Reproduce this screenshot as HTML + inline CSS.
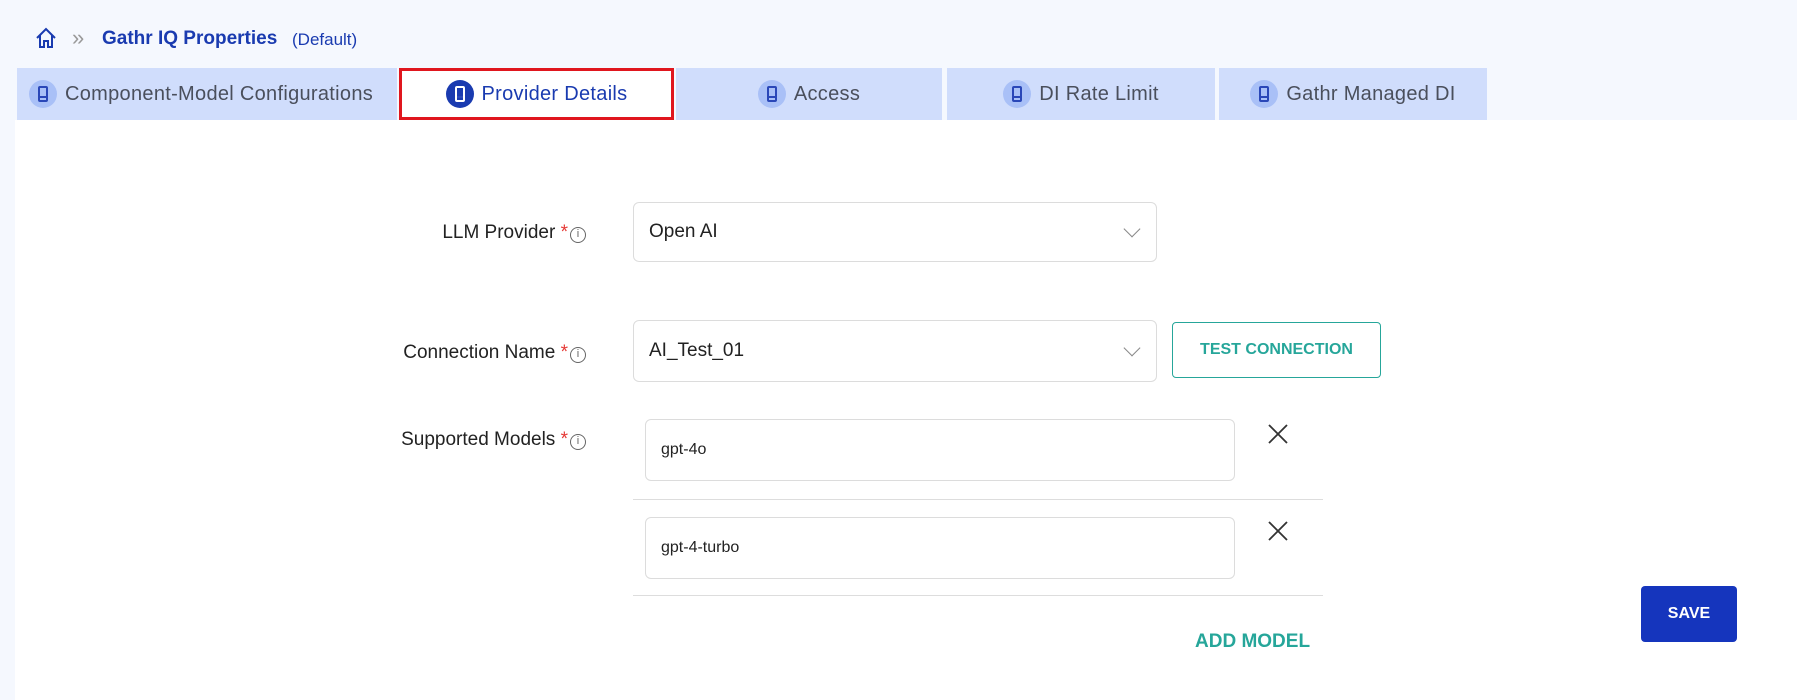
<!DOCTYPE html>
<html><head><meta charset="utf-8"><style>
*{box-sizing:border-box;margin:0;padding:0}
body{width:1797px;height:700px;overflow:hidden;background:#f5f8fe;font-family:"Liberation Sans",sans-serif;position:relative;color:#222}
.abs{position:absolute}
.tab{position:absolute;top:68px;height:52px;background:#d0ddfc;display:flex;align-items:center;justify-content:center;font-size:20px;letter-spacing:0.3px;color:#4a4f5c}
.ic{width:28px;height:28px;border-radius:50%;background:#a9c0f7;display:inline-flex;align-items:center;justify-content:center;margin-right:8px}
.ic i{width:10px;height:16px;border:2px solid #2a47b8;border-radius:2px;position:relative;display:block}
.ic i:after{content:"";position:absolute;left:0;right:0;bottom:2px;border-top:2px solid #2a47b8}
.panel{position:absolute;left:15px;top:120px;right:0;bottom:0;background:#fff}
.lbl{position:absolute;font-size:19px;color:#222;text-align:right;right:1211px;white-space:nowrap}
.lbl b{color:#e53935;font-weight:normal}
.info{display:inline-block;width:16px;height:16px;border:1.3px solid #666;border-radius:50%;font-size:11px;line-height:13px;text-align:center;color:#666;vertical-align:1px;margin-left:2px;font-style:normal}
.box{position:absolute;border:1px solid #dcdcdc;border-radius:6px;background:#fff;display:flex;align-items:center;padding-left:15px}
.chev{position:absolute;right:18px;top:50%;width:12px;height:12px;border-right:1.2px solid #888;border-bottom:1.2px solid #888;transform:translateY(-75%) rotate(45deg)}
.x{position:absolute}
.line{position:absolute;left:633px;width:690px;border-top:1.5px solid #ddd}
</style></head><body>
<svg class="abs" style="left:35px;top:27px" width="22" height="22" viewBox="0 0 22 22" fill="none" stroke="#1a3bb0" stroke-width="2"><path d="M2 11 L11 2 L20 11 M5 8 V20 H9 V14 H13 V20 H17 V8"/></svg>
<div class="abs" style="left:72px;top:25px;font-size:22px;color:#999">»</div>
<div class="abs" style="left:102px;top:28px;font-size:19px;font-weight:bold;color:#1a3bb0">Gathr IQ Properties</div>
<div class="abs" style="left:292px;top:30px;font-size:17px;color:#1a3bb0">(Default)</div>
<div class="tab" style="left:17px;width:380px;justify-content:flex-start;padding-left:12px"><span class="ic"><i></i></span>Component-Model Configurations</div>
<div class="tab" style="left:399px;width:275px;background:#fff;border:3px solid #e0161e;color:#1a3bb0"><span class="ic" style="background:#1a3bb0"><i style="border-color:#fff"></i></span>Provider Details</div>
<div class="tab" style="left:676px;width:266px"><span class="ic"><i></i></span>Access</div>
<div class="tab" style="left:947px;width:268px"><span class="ic"><i></i></span>DI Rate Limit</div>
<div class="tab" style="left:1219px;width:268px"><span class="ic"><i></i></span>Gathr Managed DI</div>
<div class="panel"></div>
<div class="lbl" style="top:222px">LLM Provider <b>*</b><span class="info">i</span></div>
<div class="box" style="left:633px;top:202px;width:524px;height:60px;font-size:19px">Open AI<span class="chev"></span></div>
<div class="lbl" style="top:342px">Connection Name <b>*</b><span class="info">i</span></div>
<div class="box" style="left:633px;top:320px;width:524px;height:62px;font-size:19px">AI_Test_01<span class="chev"></span></div>
<div class="abs" style="left:1172px;top:322px;width:209px;height:56px;border:1.5px solid #26a69a;border-radius:4px;color:#26a69a;font-weight:bold;font-size:16px;display:flex;align-items:center;justify-content:center">TEST CONNECTION</div>
<div class="lbl" style="top:429px">Supported Models <b>*</b><span class="info">i</span></div>
<div class="box" style="left:645px;top:419px;width:590px;height:62px;font-size:16px">gpt-4o</div>
<svg class="x" style="left:1268px;top:424px" width="20" height="20" viewBox="0 0 20 20" stroke="#333" stroke-width="1.8"><path d="M1 1L19 19M19 1L1 19"/></svg>
<div class="line" style="top:499px"></div>
<div class="box" style="left:645px;top:517px;width:590px;height:62px;font-size:16px">gpt-4-turbo</div>
<svg class="x" style="left:1268px;top:521px" width="20" height="20" viewBox="0 0 20 20" stroke="#333" stroke-width="1.8"><path d="M1 1L19 19M19 1L1 19"/></svg>
<div class="line" style="top:595px"></div>
<div class="abs" style="left:1195px;top:631px;font-size:19px;font-weight:bold;color:#26a69a">ADD MODEL</div>
<div class="abs" style="left:1641px;top:586px;width:96px;height:56px;background:#1535bd;border-radius:4px;color:#fff;font-weight:bold;font-size:16px;display:flex;align-items:center;justify-content:center">SAVE</div>
</body></html>
